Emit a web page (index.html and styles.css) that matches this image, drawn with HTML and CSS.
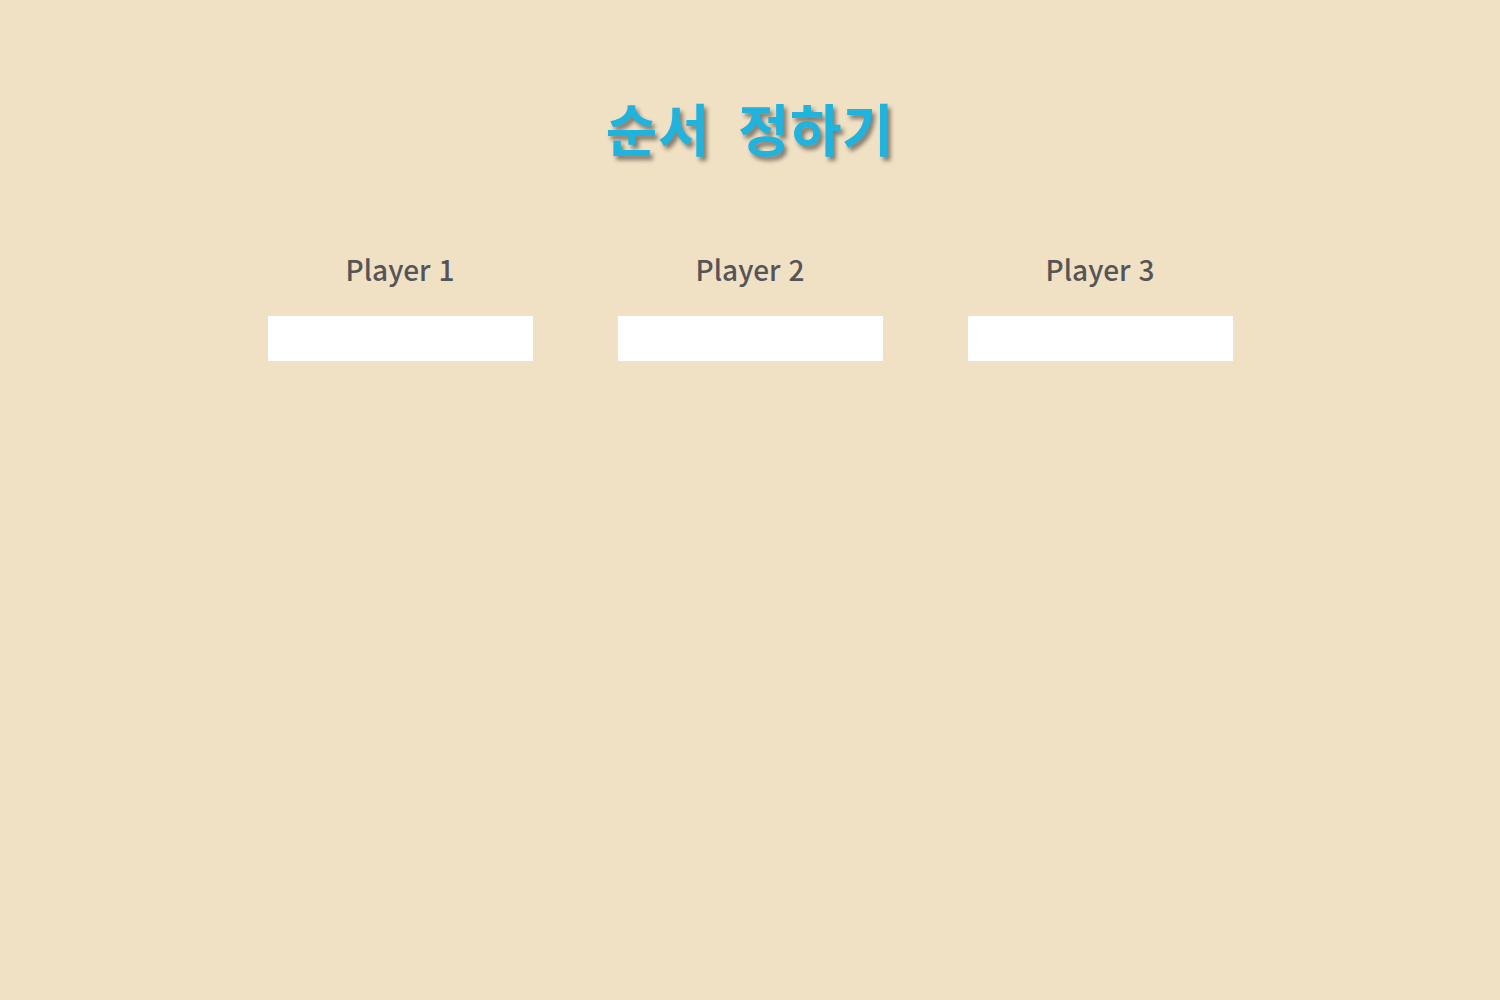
FILE: index.html
```html
<!DOCTYPE html>
<html lang="ko">
<head>
<meta charset="utf-8">
<title>순서 정하기</title>
<link rel="stylesheet" href="styles.css">
</head>
<body>
<main class="page">
  <h1 class="title">순서 정하기</h1>
  <div class="players">
    <div class="player">
      <label class="player-label">Player 1</label>
      <input class="player-input" type="text">
    </div>
    <div class="player">
      <label class="player-label">Player 2</label>
      <input class="player-input" type="text">
    </div>
    <div class="player">
      <label class="player-label">Player 3</label>
      <input class="player-input" type="text">
    </div>
  </div>
</main>
</body>
</html>
```

FILE: styles.css
```css
html, body {
  margin: 0;
  padding: 0;
  background: #f0e0c4;
  font-family: "Noto Sans CJK KR", "Noto Sans", sans-serif;
}
.page {
  width: 1500px;
  height: 1000px;
  display: flex;
  flex-direction: column;
  align-items: center;
}
.title {
  margin: 87px 0 0;
  font-size: 56px;
  line-height: 80px;
  font-weight: 700;
  color: #1fb3dd;
  letter-spacing: 0.5px;
  word-spacing: 12px;
  text-shadow: 3px 4px 4px rgba(0, 0, 0, 0.45);
}
.players {
  margin-top: 82px;
  display: grid;
  grid-template-columns: repeat(3, 350px);
}
.player {
  display: flex;
  flex-direction: column;
  align-items: center;
}
.player-label {
  font-size: 28px;
  line-height: 40px;
  font-weight: 500;
  color: #555557;
}
.player-input {
  margin-top: 27px;
  width: 265px;
  height: 45px;
  box-sizing: border-box;
  border: none;
  background: #ffffff;
  outline: none;
}
```
